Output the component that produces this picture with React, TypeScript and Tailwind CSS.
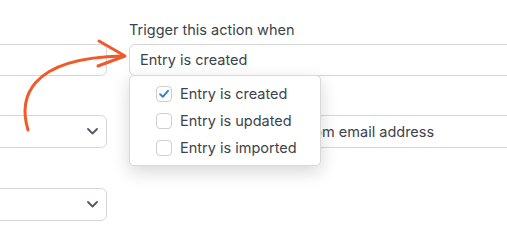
const options = [
  { label: "Entry is created", checked: true },
  { label: "Entry is updated", checked: false },
  { label: "Entry is imported", checked: false },
];

function Checkbox({ checked }: { checked: boolean }) {
  return (
    <span className="flex h-4 w-4 items-center justify-center rounded-[4px] border border-[#cfcfd3] bg-white">
      {checked && (
        <svg viewBox="0 0 16 16" className="h-3.5 w-3.5">
          <path
            d="M3.5 8.2 L6.6 11.2 L12.6 4.3"
            fill="none"
            stroke="#2f7fd6"
            strokeWidth="2.2"
            strokeLinecap="round"
            strokeLinejoin="round"
          />
        </svg>
      )}
    </span>
  );
}

function SelectBox() {
  return (
    <div className="flex h-[33px] items-center justify-end rounded-md border border-[#d6d6d8] bg-white pr-[8px]">
      <svg width="11" height="7" viewBox="0 0 11 7">
        <path d="M1 1 L5.5 5.5 L10 1" fill="none" stroke="#555a60" strokeWidth="1.8" strokeLinecap="round" strokeLinejoin="round" />
      </svg>
    </div>
  );
}

export default function App() {
  return (
    <div
      className="relative h-[240px] w-[507px] overflow-hidden bg-white text-[#3c434a]"
      style={{ fontFamily: "Inter, 'Noto Sans', sans-serif" }}
    >
      <div className="flex pt-[20px]">
        {/* left column, runs off the left edge */}
        <div className="-ml-[21px] flex w-[128px] shrink-0 flex-col pt-[24px]">
          <div className="h-[32px] rounded-md border border-[#d6d6d8] bg-white" />
          <div className="mt-[39px]">
            <SelectBox />
          </div>
          <div className="mt-[40px]">
            <SelectBox />
          </div>
        </div>

        {/* right column */}
        <div className="relative ml-[22px] w-[420px] shrink-0">
          <div className="h-[24px] text-[14.5px] leading-[20px]">
            Trigger this action when
          </div>
          <div className="flex h-[32px] items-center rounded-md border border-[#d6d6d8] bg-white pl-[10px] text-[14.5px]">
            Entry is created
          </div>
          <div className="mt-[39px] flex h-[33px] items-center rounded-md border border-[#d6d6d8] bg-white pl-[75px] text-[14.5px]">
            Use a custom from email address
          </div>

          {/* open dropdown */}
          <div className="absolute left-0 top-[55px] w-[192px] rounded-[5px] border border-[#d9d9dc] bg-white py-[4px] shadow-[0_6px_18px_rgba(0,0,0,0.16)]">
            {options.map((o) => (
              <div key={o.label} className="flex h-[27px] items-center gap-[8px] pl-[26px] text-[14.5px]">
                <Checkbox checked={o.checked} />
                <span>{o.label}</span>
              </div>
            ))}
          </div>
        </div>
      </div>

      {/* hand drawn arrow */}
      <svg className="pointer-events-none absolute left-0 top-0" width="507" height="240">
        <g fill="none" stroke="#f05a28" strokeWidth="3" strokeLinecap="round" strokeLinejoin="round">
          <path d="M28 130 C19 100 26 58 123 56" />
          <path d="M99 41 L125 56 L98 66" />
        </g>
      </svg>
    </div>
  );
}
